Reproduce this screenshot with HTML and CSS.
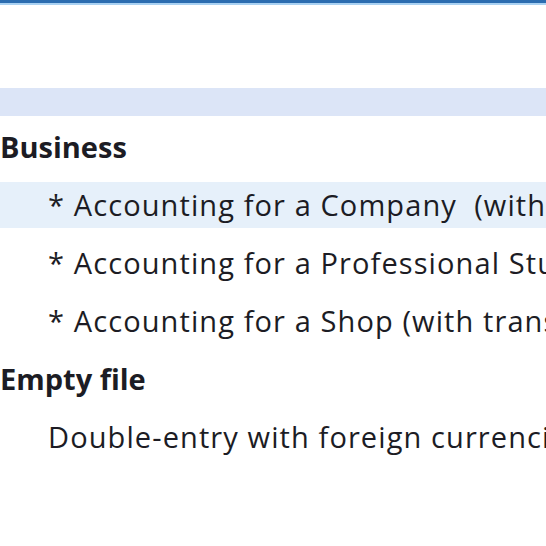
FILE: index.html
```html
<!DOCTYPE html>
<html>
<head>
<meta charset="utf-8">
<link rel="stylesheet" href="styles.css">
</head>
<body>
<div class="topbar"></div>
<div class="topbar-light"></div>
<div class="spacer"></div>
<div class="band"></div>
<ul class="list">
  <li class="row group">Business</li>
  <li class="row item selected">* Accounting for a Company&nbsp; (with transactions)</li>
  <li class="row item">* Accounting for a Professional Studio (with transactions)</li>
  <li class="row item">* Accounting for a Shop (with transactions)</li>
  <li class="row group">Empty file</li>
  <li class="row item">Double-entry with foreign currencies</li>
</ul>
</body>
</html>
```
FILE: styles.css
```css
html, body {
  margin: 0;
  padding: 0;
  background: #ffffff;
  overflow: hidden;
  width: 546px;
  height: 546px;
}
body {
  font-family: "Open Sans", "Noto Sans", sans-serif;
  color: #1c1c24;
}
.topbar {
  height: 3px;
  background: #2b6cb0;
}
.topbar-light {
  height: 2px;
  background: #a9d1f2;
}
.spacer {
  height: 83px;
}
.band {
  height: 28px;
  background: #dce5f7;
}
.list {
  list-style: none;
  margin: 8px 0 0 0;
  padding: 0;
  display: flex;
  flex-direction: column;
  gap: 12px;
}
.row {
  height: 46px;
  line-height: 46px;
  font-size: 29px;
  white-space: nowrap;
  overflow: hidden;
}
.group {
  font-weight: 700;
  letter-spacing: 0;
  padding-left: 0;
}
.item {
  padding-left: 48px;
  letter-spacing: 1.1px;
}
.selected {
  background: #e6f0fa;
}
```
